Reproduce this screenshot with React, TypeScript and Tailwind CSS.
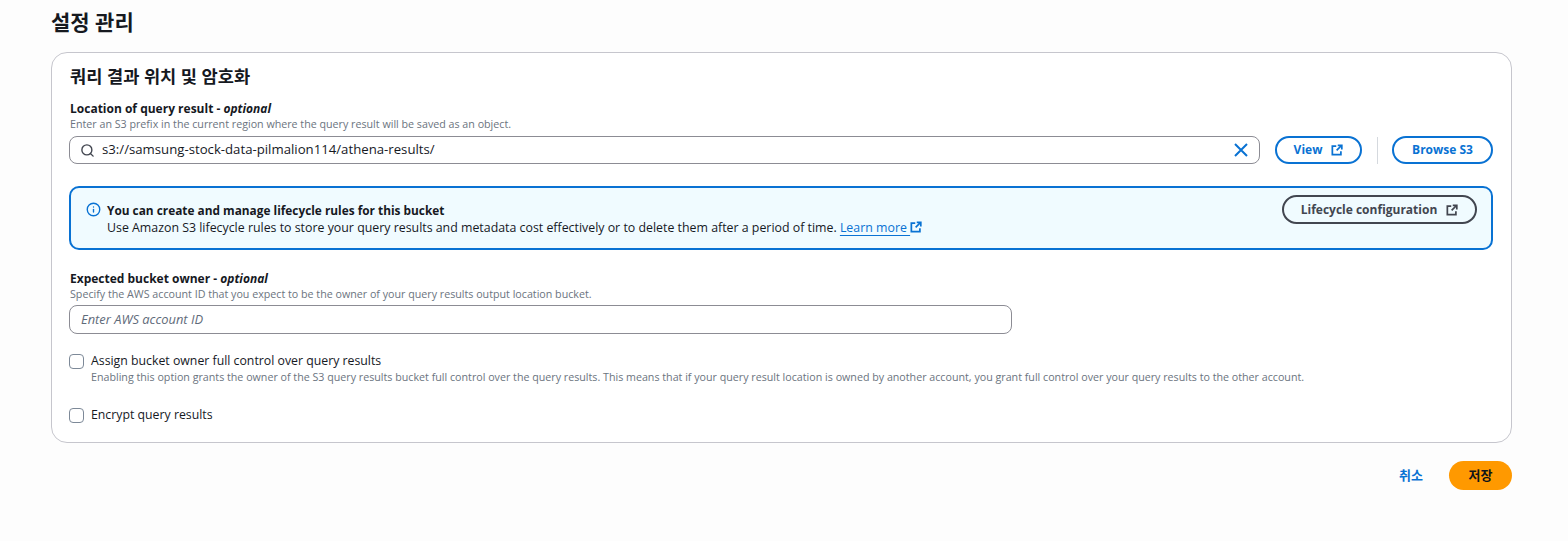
import React from "react";
import { Search, Info } from "lucide-react";

const font = "font-['Open_Sans','Noto_Sans_CJK_KR',sans-serif]";

function Ext({ className = "" }: { className?: string }) {
  return (
    <svg viewBox="0 0 16 16" fill="none" stroke="currentColor" strokeWidth="2.3" className={className}>
      <path d="M7 2.8H1.8v11.4h11.4V9.5" />
      <path d="M9 1.8h5.4v5.4M14 2 7.5 8.5" />
    </svg>
  );
}

function Pill({ children, className = "" }: { children: React.ReactNode; className?: string }) {
  return (
    <button className={`h-[28px] rounded-full border-2 border-[#0972d3] text-[#0972d3] text-[12px] font-bold flex items-center justify-center gap-[9px] ${className}`}>
      {children}
    </button>
  );
}

function Check() {
  return <span className="w-[15px] h-[15px] rounded-[4px] border border-[#7d8998] bg-white shrink-0 block" />;
}

export default function App() {
  return (
    <div className={`${font} w-[1568px] h-[541px] bg-[#fdfdfd] overflow-hidden px-[51px] pt-[8px] text-[#16191f]`}>
      <h1 className="text-[21px] leading-[28px] font-bold h-[44px]">설정 관리</h1>
      <div className="w-[1461px] h-[391px] rounded-[16px] border border-[#c6c6cd] bg-white pl-[17px] pr-[18px] pt-[11px]">
        <h2 className="text-[17.6px] leading-[24px] font-bold pl-px">쿼리 결과 위치 및 암호화</h2>
        <div className="mt-[13px] text-[12px] leading-[16px] font-bold pl-px">
          Location of query result - <i>optional</i>
        </div>
        <div className="text-[10.7px] leading-[14px] text-[#6b7480] pl-px">
          Enter an S3 prefix in the current region where the query result will be saved as an object.
        </div>
        <div className="flex items-center mt-[5px] h-[28px]">
          <div className="w-[1191px] h-[28px] rounded-[8px] border border-[#8c8c94] flex items-center pl-[10px] pr-[11px] bg-white">
            <Search className="w-[15px] h-[15px] text-[#424650]" strokeWidth={2.2} />
            <span className="ml-[7px] text-[13.2px] flex-1">s3://samsung-stock-data-pilmalion114/athena-results/</span>
            <svg viewBox="0 0 14 14" fill="none" stroke="#0972d3" strokeWidth="2" className="w-[14px] h-[14px]">
              <path d="M1 1l12 12M13 1 1 13" />
            </svg>
          </div>
          <Pill className="w-[87px] ml-[15px]">
            View <Ext className="w-[12px] h-[12px]" />
          </Pill>
          <div className="w-px h-[27px] bg-[#d5d9de] ml-[15px] mr-[14px]" />
          <Pill className="w-[101px]">Browse S3</Pill>
        </div>
        <div className="mt-[22px] w-[1424px] h-[64px] rounded-[10px] border-2 border-[#0972d3] bg-[#f0fbff] flex justify-between pl-[15px] pr-[14px] pt-[13px]">
          <div className="flex">
            <Info className="w-[15px] h-[15px] text-[#0972d3] mt-[1px]" strokeWidth={2.2} />
            <div className="ml-[6px] text-[12.36px] leading-[18px]">
              <div className="font-bold text-[11.85px]">You can create and manage lifecycle rules for this bucket</div>
              <div>
                Use Amazon S3 lifecycle rules to store your query results and metadata cost effectively or to delete them after a period of time.{" "}
                <span className="text-[#0972d3] underline underline-offset-[3px]">Learn more&nbsp;</span>
                <Ext className="inline-block w-[12px] h-[12px] text-[#0972d3] align-[-1px]" />
              </div>
            </div>
          </div>
          <button className="w-[195px] h-[29px] -mt-[6px] rounded-full border-2 border-[#424650] text-[#424650] text-[12px] font-bold flex items-center justify-center gap-[9px]">
            Lifecycle configuration <Ext className="w-[12px] h-[12px]" />
          </button>
        </div>
        <div className="mt-[21px] text-[12px] leading-[16px] font-bold pl-px">
          Expected bucket owner - <i>optional</i>
        </div>
        <div className="text-[10.7px] leading-[14px] text-[#6b7480] pl-px">
          Specify the AWS account ID that you expect to be the owner of your query results output location bucket.
        </div>
        <div className="mt-[4px] w-[943px] h-[29px] rounded-[8px] border border-[#8c8c94] bg-white flex items-center pl-[11px] text-[12.9px] italic text-[#5f6b7a]">
          Enter AWS account ID
        </div>
        <div className="mt-[19px] flex">
          <div className="mt-[1px]"><Check /></div>
          <div className="ml-[7px]">
            <div className="text-[12.3px] leading-[16px]">Assign bucket owner full control over query results</div>
            <div className="text-[10.7px] leading-[14px] text-[#6b7480] mt-[1px]">
              Enabling this option grants the owner of the S3 query results bucket full control over the query results. This means that if your query result location is owned by another account, you grant full control over your query results to the other account.
            </div>
          </div>
        </div>
        <div className="mt-[23px] flex items-center">
          <Check />
          <span className="ml-[7px] text-[12.3px] leading-[16px]">Encrypt query results</span>
        </div>
      </div>
      <div className="w-[1461px] flex justify-end items-center mt-[18px]">
        <span className="text-[13px] font-bold text-[#0972d3] mr-[26px]">취소</span>
        <button className="w-[63px] h-[29px] rounded-full bg-[#ff9900] text-[13px] font-bold text-[#0f141a]">저장</button>
      </div>
    </div>
  );
}
